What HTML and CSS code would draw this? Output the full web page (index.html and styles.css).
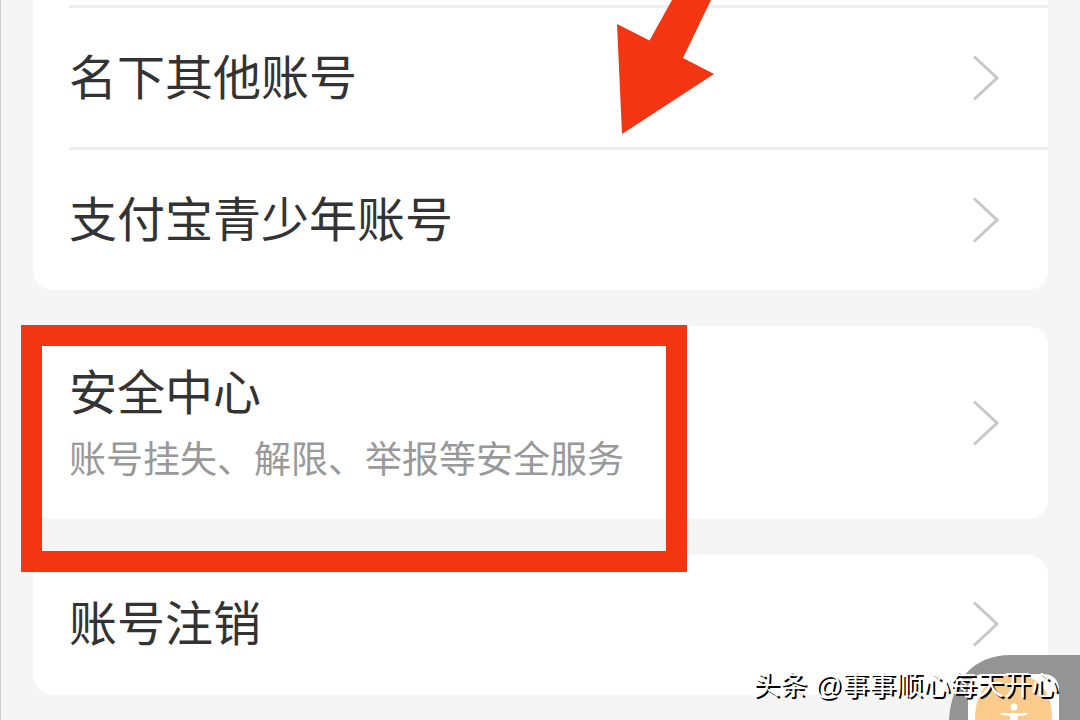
FILE: index.html
```html
<!DOCTYPE html>
<html lang="zh-CN">
<head>
<meta charset="utf-8">
<meta name="viewport" content="width=device-width, initial-scale=1">
<title>账号与安全</title>
<link rel="stylesheet" href="styles.css">
</head>
<body>
<main class="page">
  <nav class="card card-first">
    <a class="row" href="#accounts">
      <span class="title">名下其他账号</span>
      <svg class="chevron" viewBox="0 0 26 46" aria-hidden="true"><path d="M1 1.5 24 23 1 44.5"/></svg>
    </a>
    <a class="row" href="#teen">
      <span class="title">支付宝青少年账号</span>
      <svg class="chevron" viewBox="0 0 26 46" aria-hidden="true"><path d="M1 1.5 24 23 1 44.5"/></svg>
    </a>
  </nav>
  <nav class="card">
    <a class="row row-tall" href="#security">
      <span class="texts">
        <span class="title">安全中心</span>
        <span class="subtitle">账号挂失、解限、举报等安全服务</span>
      </span>
      <svg class="chevron" viewBox="0 0 26 46" aria-hidden="true"><path d="M1 1.5 24 23 1 44.5"/></svg>
    </a>
    <span class="highlight"></span>
  </nav>
  <nav class="card">
    <a class="row row-last" href="#close">
      <span class="title">账号注销</span>
      <svg class="chevron" viewBox="0 0 26 46" aria-hidden="true"><path d="M1 1.5 24 23 1 44.5"/></svg>
    </a>
  </nav>
  <svg class="arrow" viewBox="0 0 100 134" aria-hidden="true"><path d="M62 0 39.500 40.500 7 24 12 134 104 74 73 58 101 0z"/></svg>
  <button class="assist" type="button" aria-label="辅助功能">
    <svg viewBox="0 0 131 65" aria-hidden="true">
      <path d="M0 65C2 27 23 0 62 0H131V65z" fill="#949494"/>
      <path d="M19 65V36Q19 19 36 19H93Q110 19 110 36V65z" fill="#fff"/>
      <path d="M26 65C26 37 39 20 65 20S103 37 103 65z" fill="#fbcb8b"/>
      <circle cx="65" cy="52" r="3.500" fill="#fff"/>
      <path d="M52 58H78V60L69 61V65H61V61L52 60z" fill="#fff"/>
    </svg>
  </button>
  <p class="watermark">头条 @事事顺心每天开心</p>
</main>
</body>
</html>
```
FILE: styles.css
```css
* { box-sizing: border-box; }
body {
  margin: 0;
  background: #f5f5f5;
  font-family: "Noto Sans CJK SC", sans-serif;
  color: #333;
}
.page {
  position: relative;
  min-height: 100vh;
  overflow: hidden;
  border-left: 1px solid #ccc;
  padding: 0 32px 24px;
  display: flex;
  flex-direction: column;
  gap: 36px;
}
.card {
  position: relative;
  background: #fff;
  border-radius: 20px;
  padding-left: 36px;
}
.card-first {
  padding-top: 5px;
  border-radius: 0 0 20px 20px;
}
.row {
  display: flex;
  align-items: center;
  justify-content: space-between;
  min-height: 142px;
  padding-right: 49px;
  color: inherit;
  text-decoration: none;
}
.card-first .row { border-top: 3px solid #eee; }
.card-first .row + .row { min-height: 143px; }
.row-tall { min-height: 193px; }
.row-last {
  min-height: 140px;
  padding-bottom: 2px;
}
.texts {
  display: flex;
  flex-direction: column;
  padding-bottom: 4px;
}
.title {
  font-size: 48px;
  line-height: 64px;
  padding-bottom: 8px;
}
.subtitle {
  font-size: 37px;
  line-height: 56px;
  color: #999;
}
.chevron {
  width: 26px;
  height: 46px;
  flex: none;
  fill: none;
  stroke: #c8c8c8;
  stroke-width: 3;
}
.highlight {
  position: absolute;
  left: -12px;
  top: -1px;
  width: 666px;
  height: 247px;
  border: 21px solid #f43512;
  z-index: 1;
  pointer-events: none;
}
.arrow {
  position: absolute;
  left: 609px;
  top: 0;
  width: 100px;
  height: 134px;
  overflow: visible;
  fill: #f43512;
}
.assist {
  position: absolute;
  right: 0;
  bottom: 0;
  width: 131px;
  height: 65px;
  padding: 0;
  border: 0;
  background: none;
}
.assist svg { display: block; }
.watermark {
  position: absolute;
  right: 22px;
  bottom: 14px;
  margin: 0;
  font-family: "Liberation Sans", "Noto Sans CJK SC", sans-serif;
  font-size: 27px;
  line-height: 40px;
  color: #fff;
  text-shadow: 2px 2px 0 #000;
  white-space: nowrap;
}
```
